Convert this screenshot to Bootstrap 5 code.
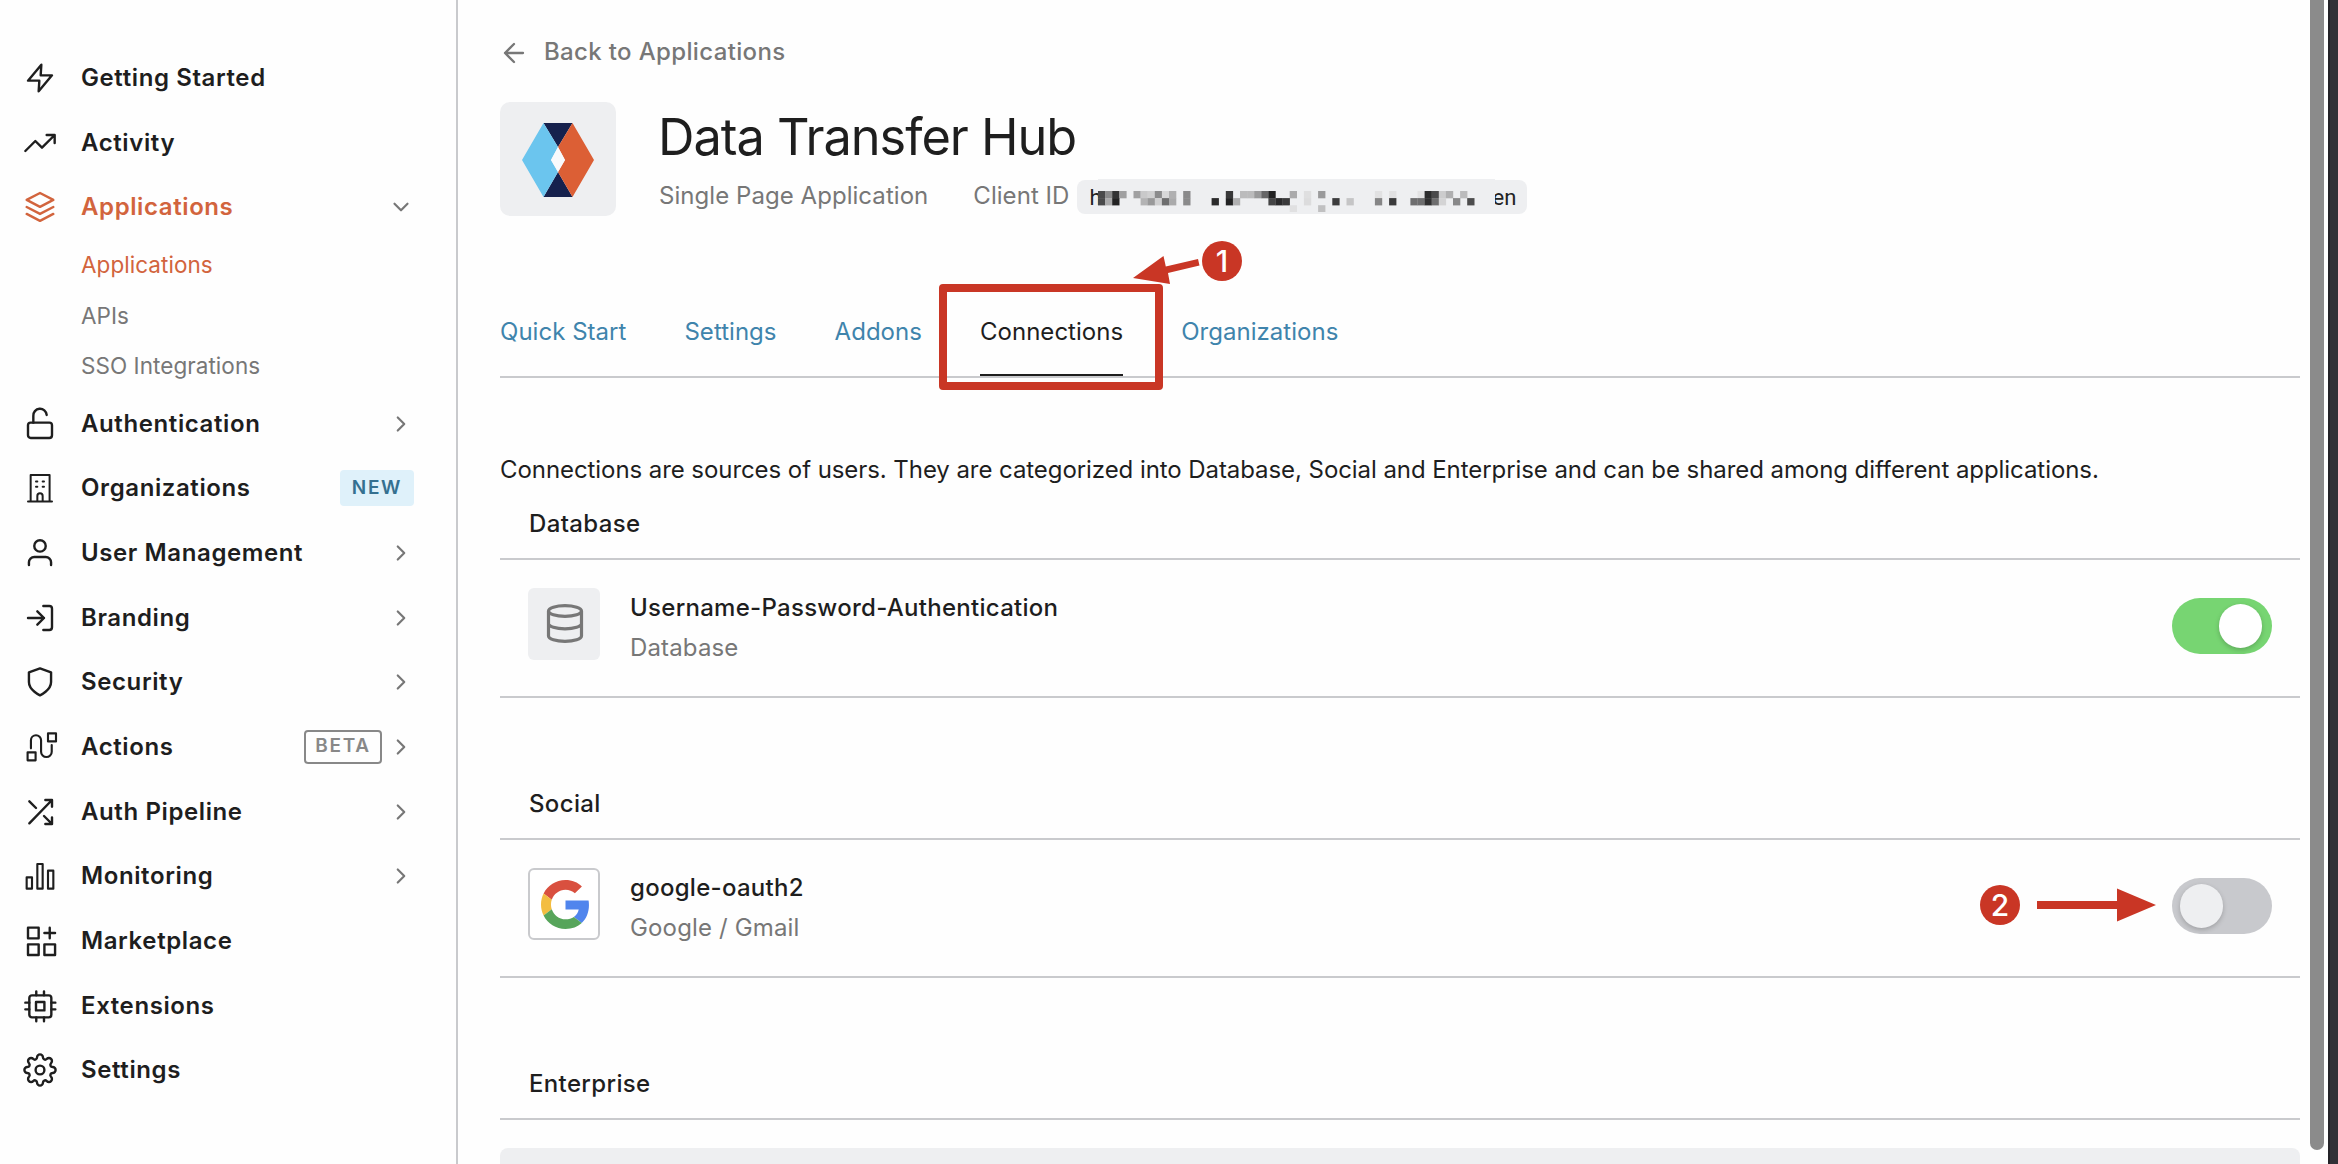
<!doctype html>
<html lang="en">
<head>
<meta charset="utf-8">
<title>Data Transfer Hub</title>
<link rel="stylesheet" href="https://cdn.jsdelivr.net/npm/bootstrap@5.3.0/dist/css/bootstrap.min.css">
<style>
  body { font-family: Inter, "Liberation Sans", sans-serif; font-size: 24px; line-height: 36px; letter-spacing: -.07px; color: #1e1e1e; background: #fefefe; height: 100vh; overflow: hidden; }
  .sidebar { width: 458px; border-right: 2px solid #c9cacd; padding-top: 45.7px; font-weight: 600; letter-spacing: .6px; }
  .sidebar .nav-link { height: 64.7px; padding: 0 42px 0 24px; color: #1e1e1e; }
  .sidebar .nav-link.active { color: #d2643d; }
  .ico { width: 32px; height: 32px; margin-right: 25px; fill: none; stroke: currentColor; stroke-width: 1.8; stroke-linecap: round; stroke-linejoin: round; flex: none; }
  .chev { width: 26px; height: 26px; fill: none; stroke: #777; stroke-width: 2; stroke-linecap: round; stroke-linejoin: round; }
  .subnav { padding: 0 0 0 81px; height: 151.5px; font-size: 22.5px; font-weight: 400; letter-spacing: .05px; }
  .subnav a { height: 50.5px; color: #777; text-decoration: none; }
  .subnav a.active { color: #d2643d; }
  .tag-new { background: #dff1fa; color: #357090; font-size: 19px; letter-spacing: 1.7px; border-radius: 4px; width: 74px; height: 36px; }
  .tag-beta { border: 2px solid #888; color: #888; font-size: 19px; letter-spacing: 1.7px; border-radius: 4px; width: 78px; height: 34px; margin-right: 6px; padding-bottom: 3px; }
  .page { padding: 0 10px 0 42px; }
  .back { height: 102px; padding-top: 1.5px; color: #777; font-weight: 500; letter-spacing: .35px; }
  .app-tile { width: 116px; height: 114px; background: #eeeff1; border-radius: 10px; margin-right: 43px; padding-top: 2px; }
  .app-title { font-size: 50.5px; font-weight: 400; line-height: 64px; letter-spacing: -1.05px; margin: 3px 0 0 -1px; }
  .app-meta { height: 54px; color: #777; letter-spacing: .05px; }
  .app-kind { margin-right: 45px; }
  .client-id { width: 450px; height: 34px; margin: 2px 0 0 8px; background: #eeeff1; border-radius: 8px; color: #222; font: 22px/36px Roboto, sans-serif; padding: 0 11px 0 12px; }
  .client-id svg { position: absolute; left: 21px; top: -1px; }
  .app-tabs { margin-top: 65px; gap: 58px; border-bottom: 2px solid #c9cacd; letter-spacing: .03px; }
  .app-tabs .nav-link { height: 88px; padding: 0; color: #3f84ac; border-bottom: 2px solid transparent; line-height: 88px; }
  .app-tabs .nav-link.active { color: #1e1e1e; border-color: #1e1e1e; }
  .ring { position: absolute; left: -41px; top: -4px; width: 224px; height: 106px; border: 8px solid #c93625; border-radius: 4px; }
  .arrow-one { position: absolute; left: 153px; top: -32px; }
  .step { width: 40px; height: 40px; border-radius: 50%; background: #c93625; color: #fff; font-weight: 500; font-size: 30px; line-height: 40px; text-align: center; letter-spacing: 0; }
  .step-one { position: absolute; left: 222px; top: -47px; }
  .step-two { margin-right: 17px; }
  .arrow-two { margin-right: 15px; }
  .intro { margin: 74px 0 0; }
  .group { height: 280px; }
  .group h2 { height: 72px; margin: 0; padding: 0 0 0 29px; border-bottom: 2px solid #c9cacd; font-size: 24px; font-weight: 500; line-height: 71px; letter-spacing: .35px; }
  .conn { height: 138px; border-bottom: 2px solid #c9cacd; padding: 28px 28px 0; }
  .conn-tile { width: 72px; height: 72px; background: #eeeff1; border-radius: 6px; margin-right: 30px; }
  .conn-tile.outlined { background: #fff; border: 2px solid #c9cacd; }
  .conn-tile.outlined svg { margin-left: 2px; margin-top: 1px; }
  .conn-name { font-weight: 500; line-height: 40px; letter-spacing: .28px; }
  .conn-kind { color: #777; line-height: 40px; letter-spacing: .15px; }
  .switch-track { width: 100px; height: 56px; border-radius: 28px; background: #c8c9cd; padding: 6px 8px; margin-top: 10px; }
  .switch-track span { width: 43px; height: 44px; border-radius: 22px; background: #eeeff1; box-shadow: 0 2px 5px rgba(0,0,0,.2); }
  .switch-track.on { background: #77d572; justify-content: end; padding-right: 10px; }
  .switch-track.on span { background: #fff; }
  .panel-next { height: 40px; margin-top: 28px; background: #eeeff1; border-radius: 8px 8px 0 0; }
  .scroller { width: 14px; height: 1150px; background: #8b8b8b; border-radius: 0 0 7px 7px; margin-right: 4px; }
  .edge { width: 10px; background: #323137; border-left: 2px solid #242328; }
</style>
<script src="https://cdn.jsdelivr.net/npm/bootstrap@5.3.0/dist/js/bootstrap.bundle.min.js"></script>
</head>
<body class="d-flex">
<svg width="0" height="0" class="position-absolute">
  <symbol id="right" viewBox="0 0 24 24"><path d="M9 18l6-6-6-6"/></symbol>
</svg>
<aside class="sidebar flex-shrink-0">
  <nav class="nav flex-column flex-nowrap">
    <a class="nav-link d-flex align-items-center" href="#"><svg class="ico" viewBox="0 0 24 24"><path d="M13 2 3 14h8.500L11 22 21 10h-8.500z"/></svg>Getting Started</a>
    <a class="nav-link d-flex align-items-center" href="#"><svg class="ico overflow-visible" viewBox="0 0 24 24"><path d="M23 6l-9.500 9.500-5-5L1 18M17 6h6v6"/></svg>Activity</a>
    <a class="nav-link active d-flex align-items-center" href="#"><svg class="ico" viewBox="0 0 24 24"><path d="M12 1.500 2 6.700l10 5.200 10-5.200zM2 17.200l10 5.200 10-5.200M2 12l10 5.200L22 12"/></svg>Applications<svg class="chev ms-auto" viewBox="0 0 24 24"><path d="M6 9l6 6 6-6"/></svg></a>
    <div class="subnav d-flex flex-column">
      <a class="active d-flex align-items-center" href="#">Applications</a>
      <a class="d-flex align-items-center" href="#">APIs</a>
      <a class="d-flex align-items-center" href="#">SSO Integrations</a>
    </div>
    <a class="nav-link d-flex align-items-center" href="#"><svg class="ico overflow-visible" viewBox="0 0 24 24"><rect x="3" y="11" width="18" height="11.500" rx="2"/><path d="M7 11V6a5 5 0 0 1 10-.8"/></svg>Authentication<svg class="chev ms-auto"><use href="#right"/></svg></a>
    <a class="nav-link d-flex align-items-center" href="#"><svg class="ico" viewBox="0 0 24 24"><g stroke-width="1.500"><path d="M3 22.200h18M5 22V2.200h14.200V22M10 22v-4a2 2 0 0 1 4 0v4M9 7.200h1M14 7.200h1M9 11h1M14 11h1"/></g></svg>Organizations<span class="tag-new ms-auto d-flex align-items-center justify-content-center">NEW</span></a>
    <a class="nav-link d-flex align-items-center" href="#"><svg class="ico" viewBox="0 0 24 24"><path d="M20.300 21v-2a4 4 0 0 0-4-4H7.700a4 4 0 0 0-4 4v2"/><circle cx="12" cy="6.700" r="4.300"/></svg>User Management<svg class="chev ms-auto"><use href="#right"/></svg></a>
    <a class="nav-link d-flex align-items-center" href="#"><svg class="ico" viewBox="0 0 24 24"><path d="M14.500 3H19a2 2 0 0 1 2 2v14a2 2 0 0 1-2 2h-4.500M10 17l5-5-5-5M15 12H3"/></svg>Branding<svg class="chev ms-auto"><use href="#right"/></svg></a>
    <a class="nav-link d-flex align-items-center" href="#"><svg class="ico" viewBox="0 0 24 24"><path d="M12 22s8.300-3.800 8.300-10V4.700L12 1.800 3.700 4.700V12c0 6.200 8.300 10 8.300 10z"/></svg>Security<svg class="chev ms-auto"><use href="#right"/></svg></a>
    <a class="nav-link d-flex align-items-center" href="#"><svg class="ico overflow-visible" viewBox="0 0 24 24"><g stroke-width="1.600"><path d="M2.700 16h6v6h-6zM18 1.800h6v6h-6zM5.200 13V7a3.800 3.800 0 0 1 7.600 0v8.500a4 4 0 0 0 8 0V10.500"/></g></svg>Actions<span class="tag-beta ms-auto d-flex align-items-center justify-content-center">BETA</span><svg class="chev"><use href="#right"/></svg></a>
    <a class="nav-link d-flex align-items-center" href="#"><svg class="ico" viewBox="0 0 24 24"><path d="M16 3h5v5M4 20.500 21 3M21 16v5h-5M15 15l6 6M4 4l5 5"/></svg>Auth Pipeline<svg class="chev ms-auto"><use href="#right"/></svg></a>
    <a class="nav-link d-flex align-items-center" href="#"><svg class="ico" viewBox="0 0 24 24"><g stroke-width="1.600"><path d="M2 13h4v8.500H2zM10 3h4v18.500h-4zM18 8h4v13.500h-4z"/></g></svg>Monitoring<svg class="chev ms-auto"><use href="#right"/></svg></a>
    <a class="nav-link d-flex align-items-center" href="#"><svg class="ico overflow-visible" viewBox="0 0 24 24"><path d="M3 2h8v8H3zM3 14.500h8v8H3zM15.300 14.500h8v8h-8zM19.300 2v8M15.300 6h8"/></svg>Marketplace</a>
    <a class="nav-link d-flex align-items-center" href="#"><svg class="ico overflow-visible" viewBox="0 0 24 24"><rect x="4" y="4" width="16.500" height="16.500" rx="2"/><path d="M9 9h6.300v6.300H9zM9.200 1v3M15 1v3M9.200 20.500v3M15 20.500v3M20.500 9.500h3M20.500 14.500h3M1 9.500h3M1 14.500h3"/></svg>Extensions</a>
    <a class="nav-link d-flex align-items-center" href="#"><svg class="ico overflow-visible" viewBox="0 0 24 24"><circle cx="12" cy="12" r="3.300"/><path d="M12 .3a2.200 2.200 0 0 1 2.200 2.200c0 1.600 1.700 2.300 2.900 1.200a2.200 2.200 0 0 1 3.200 3.200c-1.100 1.200-.4 2.900 1.200 2.900a2.200 2.200 0 0 1 0 4.400c-1.600 0-2.300 1.700-1.200 2.900a2.200 2.200 0 0 1-3.200 3.200c-1.200-1.100-2.900-.4-2.900 1.200a2.200 2.200 0 0 1-4.400 0c0-1.600-1.700-2.300-2.900-1.200a2.200 2.200 0 0 1-3.200-3.200c1.100-1.200.4-2.900-1.200-2.900a2.200 2.200 0 0 1 0-4.400c1.600 0 2.300-1.700 1.200-2.900a2.200 2.200 0 0 1 3.200-3.200c1.200 1.100 2.900.4 2.900-1.200A2.200 2.200 0 0 1 12 .3z"/></svg>Settings</a>
  </nav>
</aside>
<main class="page flex-grow-1">
  <div class="back d-flex align-items-center"><svg width="28" height="28" viewBox="0 0 28 28" fill="none" stroke="#777" stroke-width="2.300" stroke-linecap="round" stroke-linejoin="round"><path d="M23 15H5M14 6l-9 9 9 9"/></svg><span class="ps-3">Back to Applications</span></div>
  <header class="d-flex">
    <div class="app-tile d-flex align-items-center justify-content-center"><svg width="72" height="74" viewBox="0 0 72 74"><path fill="#16214d" d="M21.500 0h29L36 24zM21.500 74h29L36 49z"/><path fill="#6bc5ee" d="M21.500 0 36 24l-7 13 7 12-14.500 25L0 37z"/><path fill="#dc5f35" d="M50.500 0 36 24l7 13-7 12 14.500 25L72 37z"/><path fill="#f8fafc" d="m36 24 7 13-7 12-7-12z"/></svg></div>
    <div>
      <h1 class="app-title">Data Transfer Hub</h1>
      <div class="app-meta d-flex align-items-center"><span class="app-kind">Single Page Application</span><span>Client ID</span>
        <div class="client-id position-relative d-flex justify-content-between"><span>h</span><span>en</span>
          <svg width="397" height="33" viewBox="0 0 397 33" id="mosaic"><rect width="397" height="33" fill="#eeeff1"/></svg>
        </div>
      </div>
    </div>
  </header>
  <ul class="nav app-tabs">
    <li><a class="nav-link" href="#">Quick Start</a></li>
    <li><a class="nav-link" href="#">Settings</a></li>
    <li><a class="nav-link" href="#">Addons</a></li>
    <li class="position-relative"><a class="nav-link active" href="#">Connections</a>
      <div class="ring"></div>
      <svg class="arrow-one" width="68" height="29" viewBox="0 0 68 29"><path fill="#c93625" d="M0 22 30.500 0l2.300 10.500L65 3l1.500 6.500L35 17l2 11z"/></svg>
      <div class="step step-one">1</div>
    </li>
    <li><a class="nav-link" href="#">Organizations</a></li>
  </ul>
  <p class="intro">Connections are sources of users. They are categorized into Database, Social and Enterprise and can be shared among different applications.</p>
  <section class="group">
    <h2>Database</h2>
    <div class="conn d-flex align-items-start">
      <div class="conn-tile d-flex align-items-center justify-content-center"><svg width="40" height="40" viewBox="0 0 40 40" fill="none" stroke="#777" stroke-width="3.200"><ellipse cx="21" cy="7" rx="16.500" ry="5.300"/><path d="M4.500 7v25c0 3 7.400 5.300 16.500 5.300S37.500 35 37.500 32V7M4.500 19.500c0 3 7.400 5.300 16.500 5.300s16.500-2.300 16.500-5.300"/></svg></div>
      <div><div class="conn-name">Username-Password-Authentication</div><div class="conn-kind">Database</div></div>
      <div class="switch-track on d-flex ms-auto"><span></span></div>
    </div>
  </section>
  <section class="group">
    <h2>Social</h2>
    <div class="conn d-flex align-items-start">
      <div class="conn-tile outlined d-flex align-items-center justify-content-center"><svg width="49" height="49" viewBox="0 0 48 48"><path fill="#d9503f" d="M24 9.500c3.540 0 6.710 1.220 9.210 3.600l6.850-6.850C35.900 2.380 30.470 0 24 0 14.620 0 6.510 5.380 2.560 13.220l7.980 6.190C12.430 13.720 17.740 9.500 24 9.500z"/><path fill="#5085ed" d="M46.980 24.550c0-1.570-.15-3.090-.38-4.550H24v9.020h12.940c-.58 2.960-2.260 5.480-4.780 7.180l7.730 6c4.510-4.180 7.090-10.360 7.090-17.650z"/><path fill="#f3bd41" d="M10.530 28.590c-.48-1.450-.76-2.990-.76-4.590s.27-3.140.76-4.590l-7.980-6.190C.92 16.460 0 20.120 0 24c0 3.880.92 7.540 2.560 10.780l7.970-6.190z"/><path fill="#57a55b" d="M24 48c6.480 0 11.930-2.130 15.890-5.810l-7.730-6c-2.150 1.450-4.920 2.300-8.160 2.300-6.260 0-11.570-4.220-13.470-9.910l-7.980 6.190C6.510 42.620 14.620 48 24 48z"/></svg></div>
      <div><div class="conn-name">google-oauth2</div><div class="conn-kind">Google / Gmail</div></div>
      <div class="ms-auto d-flex align-items-center">
        <div class="step step-two mt-2">2</div>
        <svg class="arrow-two mt-2" width="120" height="34" viewBox="0 0 120 34"><path fill="#c93625" d="M0 13h80V.500L119 17 80 33.500V21H0z"/></svg>
        <div class="switch-track d-flex"><span></span></div>
      </div>
    </div>
  </section>
  <section>
    <div class="group h-auto"><h2>Enterprise</h2></div>
    <div class="panel-next"></div>
  </section>
</main>
<div class="scroller flex-shrink-0"></div>
<div class="edge flex-shrink-0"></div>
<script>
  // Obscured client id: rows of [column, grey level] cells, 7.1px each
  const rows = [
    [12, [[0,74],[1,138],[2,51],[3,160],[5,160],[6,201],[7,208],[8,139],[9,216],[10,176],[12,138],[18,56],[20,187],[21,187],[22,154],[23,102],[24,34],[27,170],[29,223],[31,154],[39,225],[41,225],[45,227],[46,44],[47,74],[48,204],[49,176],[51,187]]],
    [19.1, [[0,74],[1,170],[2,34],[6,179],[7,153],[8,207],[9,110],[10,170],[12,138],[16,42],[18,34],[19,176],[24,68],[25,42],[26,58],[29,220],[33,60],[35,197],[39,133],[41,58],[44,110],[45,110],[46,48],[47,110],[48,212],[50,136],[52,76]]],
    [26.2, [[27,224],[31,192]]]
  ];
  const svg = document.getElementById('mosaic');
  for (const [y, cells] of rows) for (const [c, g] of cells) {
    const r = document.createElementNS('http://www.w3.org/2000/svg', 'rect');
    r.setAttribute('x', c * 7.1); r.setAttribute('y', y);
    r.setAttribute('width', 7.3); r.setAttribute('height', y > 26 ? 6.8 : 7.3);
    r.setAttribute('fill', `rgb(${g},${g},${g + 1})`);
    svg.appendChild(r);
  }
</script>
</body>
</html>
